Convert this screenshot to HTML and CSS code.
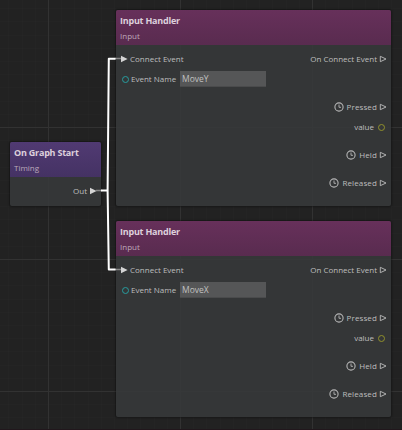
FILE: index.html
```html
<!DOCTYPE html>
<html lang="en">
<head>
<meta charset="utf-8">
<title>Graph</title>
<link rel="stylesheet" href="styles.css">
</head>
<body>
<svg class="defs" width="0" height="0" aria-hidden="true">
  <symbol id="flow" viewBox="0 0 8 8"><path d="M1.3 1.3L7 4L1.3 6.7Z" fill="none" stroke="#bdbdbd" stroke-width=".9"/></symbol>
  <symbol id="flow-on" viewBox="0 0 8 8"><path d="M1 .7L7.6 4L1 7.3Z" fill="#d4d4d4"/></symbol>
  <symbol id="clock" viewBox="0 0 10 10"><circle cx="5" cy="5" r="4.1" fill="none" stroke="#b5b5b5" stroke-width="1.1"/><path d="M5 2.5V5.3H7" fill="none" stroke="#b5b5b5" stroke-width=".9"/></symbol>
</svg>
<main class="canvas">
  <section class="node start">
    <header><h2>On Graph Start</h2><p>Timing</p></header>
    <div class="row out"><span>Out</span><svg class="flow"><use href="#flow-on"/></svg></div>
  </section>

  <section class="node handler first">
    <header><h2>Input Handler</h2><p>Input</p></header>
    <div class="row"><svg class="flow"><use href="#flow-on"/></svg><span>Connect Event</span><span class="push">On Connect Event</span><svg class="flow"><use href="#flow"/></svg></div>
    <div class="row"><i class="ring teal"></i><span class="label">Event Name</span><span class="field">MoveY</span></div>
    <div class="row out gap"><svg class="clock"><use href="#clock"/></svg><span class="event">Pressed</span><svg class="flow"><use href="#flow"/></svg></div>
    <div class="row out"><span>value</span><i class="ring olive"></i></div>
    <div class="row out gap"><svg class="clock"><use href="#clock"/></svg><span class="event">Held</span><svg class="flow"><use href="#flow"/></svg></div>
    <div class="row out gap"><svg class="clock"><use href="#clock"/></svg><span class="event">Released</span><svg class="flow"><use href="#flow"/></svg></div>
  </section>

  <section class="node handler second">
    <header><h2>Input Handler</h2><p>Input</p></header>
    <div class="row"><svg class="flow"><use href="#flow-on"/></svg><span>Connect Event</span><span class="push">On Connect Event</span><svg class="flow"><use href="#flow"/></svg></div>
    <div class="row"><i class="ring teal"></i><span class="label">Event Name</span><span class="field">MoveX</span></div>
    <div class="row out gap"><svg class="clock"><use href="#clock"/></svg><span class="event">Pressed</span><svg class="flow"><use href="#flow"/></svg></div>
    <div class="row out"><span>value</span><i class="ring olive"></i></div>
    <div class="row out gap"><svg class="clock"><use href="#clock"/></svg><span class="event">Held</span><svg class="flow"><use href="#flow"/></svg></div>
    <div class="row out gap"><svg class="clock"><use href="#clock"/></svg><span class="event">Released</span><svg class="flow"><use href="#flow"/></svg></div>
  </section>

  <svg class="wires" width="402" height="430" viewBox="0 0 402 430">
    <g fill="none" stroke="#888" stroke-width="1.5"><path d="M96 190.5H102M115 58.5H121M115 269.5H121"/></g>
    <g fill="none" stroke="#fff" stroke-width="2" stroke-linejoin="round"><path d="M101 190.5H107.6L108.8 58.7H115.5M107.6 190.5L108.8 269.5H115.5"/></g>
  </svg>
</main>
</body>
</html>
```
FILE: styles.css
```css
* { box-sizing: border-box; }
body { margin: 0; background: #222; font-family: "Open Sans", "Noto Sans", sans-serif; font-size: 8px; color: #bebebe; }
.defs { position: absolute; }
.canvas {
  position: relative; width: 402px; height: 430px; overflow: hidden;
  border-bottom: 1px solid #21171c;
  background:
    linear-gradient(90deg, #323232 1px, transparent 1px) 48px 0 / 132px 132px,
    linear-gradient(#323232 1px, transparent 1px) 0 127px / 132px 132px,
    repeating-linear-gradient(90deg, rgba(255,255,255,.008) 0 1px, transparent 1px 13.2px) 48px 0 / 132px 132px,
    repeating-linear-gradient(rgba(255,255,255,.008) 0 1px, transparent 1px 13.2px) 0 127px / 132px 132px,
    #222;
}
.node { position: absolute; border-radius: 2px; background: rgba(54,56,58,.9); box-shadow: 0 0 2px 1px rgba(0,0,0,.38); overflow: hidden; }
.start { left: 10px; top: 142px; width: 91px; height: 64px; }
.handler { left: 116px; width: 275px; height: 196px; }
.first { top: 10px; }
.second { top: 221px; }
header { height: 35px; padding: 5px 4px 0; margin-bottom: 4px; background: linear-gradient(rgba(105,48,92,.96), rgba(90,43,80,.97)); }
.start header { background: linear-gradient(rgba(82,58,117,.96), rgba(69,50,101,.97)); }
h2 { margin: 0; font-size: 9px; line-height: 12px; font-weight: 700; letter-spacing: -.22px; color: #ddd0dc; white-space: nowrap; }
header p { margin: 3px 0 0; font-size: 8px; line-height: 11px; color: #bda9bb; }
.row { display: flex; align-items: center; height: 20px; padding: 0 4px; white-space: nowrap; line-height: 12px; }
.out { justify-content: flex-end; }
.gap { margin-top: 8px; }
.push { margin-left: auto; }
.event { letter-spacing: .12px; }
.flow { width: 8px; height: 8px; flex: none; margin-bottom: 1px; }
.row > .flow:first-child { margin-right: 2px; }
.row > .flow:last-child { margin-left: 2px; }
.row > .clock { width: 10px; height: 10px; flex: none; margin-right: 3px; }
.start .row > .flow:last-child { margin-right: 0; }
.ring { width: 7px; height: 7px; flex: none; border: 1px solid; border-radius: 50%; }
.teal { margin: 0 2px; color: #279d9f; }
.olive { margin: 0 2px 0 4px; color: #91912b; }
.label { width: 49px; }
.field { width: 86px; height: 16px; padding-left: 2px; background: #555657; border-bottom: 1px solid #4a4b4c; font-size: 8.5px; line-height: 15px; color: #c0c0c0; }
.wires { position: absolute; inset: 0; pointer-events: none; }
```
